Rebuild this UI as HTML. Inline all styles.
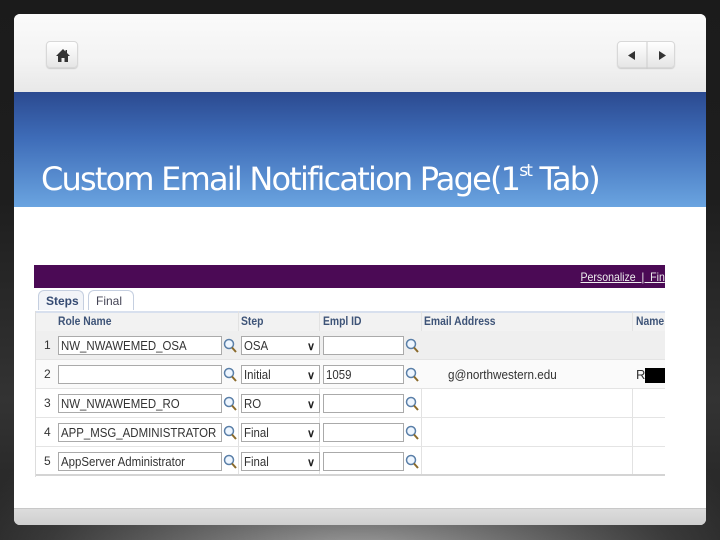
<!DOCTYPE html>
<html><head><meta charset="utf-8"><style>
*{margin:0;padding:0;box-sizing:border-box}
body{width:720px;height:540px;overflow:hidden;position:relative;font-family:"Liberation Sans",sans-serif;
background:radial-gradient(ellipse 420px 160px at 360px 560px,#a0a0a0 0%,#6a6a6a 40%,#3a3a3a 75%,#222 100%),#1c1c1c;}
.bg{position:absolute;left:0;top:0;width:720px;height:540px;background:linear-gradient(#1b1b1b 0,#1e1e1e 200px,#333 400px,rgba(0,0,0,0) 540px);}
.panel{position:absolute;left:14px;top:14px;width:692px;height:511px;border-radius:6px;background:#fff;overflow:hidden}
.top{position:absolute;left:0;top:0;width:692px;height:78px;background:linear-gradient(#fafafa,#f3f3f3 60%,#e8e8e8)}
.blue{position:absolute;left:0;top:78px;width:692px;height:115px;background:linear-gradient(#2b4a90 0%,#3e6cb8 40%,#6aa4e0 100%)}
.title{position:absolute;left:27px;top:146px;color:#fff;font-size:32px;font-family:"DejaVu Sans","Liberation Sans",sans-serif;letter-spacing:-1.8px;white-space:nowrap}
.title sup{font-size:17px;vertical-align:14px}
.foot{position:absolute;left:0;top:494px;width:692px;height:17px;background:linear-gradient(#dcdcdc,#cfcfcf);border-top:1px solid #c8c8c8}
.btn{position:absolute;border:1px solid #d8d8d8;border-radius:4px;background:linear-gradient(#fff,#e6e6e6);box-shadow:0 1px 1px #ccc}
.shot{position:absolute;left:34px;top:258px;width:631px;height:220px;background:#fff}
.purple{position:absolute;left:0;top:7px;width:631px;height:23px;background:#4b0a55}
.pers{position:absolute;right:0;top:5px;color:#eee;font-size:12px;text-decoration:underline;white-space:nowrap;transform:scaleX(.88);transform-origin:right}
.tab{position:absolute;top:32px;height:20px;border:1px solid #c5cfe0;border-bottom:none;border-radius:6px 6px 0 0;font-size:12px;font-weight:bold;color:#344a72;padding:3px 7px;background:#f2f4f8}
.hdr{position:absolute;left:2px;top:53px;width:629px;height:20px;background:#f2f2f2;border-top:2px solid #d8e0ee}
.h{position:absolute;top:3px;font-size:11.5px;font-weight:bold;color:#3e5478;transform:scaleX(.9);transform-origin:left}
.row{position:absolute;left:2px;width:629px;height:29px;border-bottom:1px solid #e4e4e4}
.n{position:absolute;left:8px;top:7px;font-size:12px;color:#333}
.in{position:absolute;top:5px;height:19px;border:1px solid #aaa;background:#fff;font-size:13px;color:#333;padding:1px 2px;white-space:nowrap;overflow:hidden}
.in span{display:inline-block;transform:scaleX(.88);transform-origin:left}
.mag{position:absolute;top:7px;width:14px;height:15px}
.chev{position:absolute;right:4px;top:3px;font-size:11px;color:#222}
.vl{position:absolute;top:53px;width:1px;height:165px;background:#e2e2e2}
</style></head><body>
<div class="bg"></div>
<div class="panel">
 <div class="top"></div>
 <div class="blue"></div>
 <div class="title">Custom Email Notification Page(1<sup>st</sup> Tab)</div>
 <div class="foot"></div>
</div>
<div class="btn" style="left:46px;top:41px;width:32px;height:27px">
 <svg width="32" height="27" viewBox="0 0 32 27"><path d="M16 7 L9 14 H11 V20 H14.5 V16 H17.5 V20 H21 V14 H23 L20 11 V8 H18.5 V9.5 Z" fill="#333"/></svg>
</div>
<div class="btn" style="left:617px;top:41px;width:58px;height:27px">
 <svg width="58" height="27" viewBox="0 0 58 27"><path d="M10 13.5 L17 9 V18 Z" fill="#333"/><line x1="29" y1="0" x2="29" y2="27" stroke="#ccc"/><path d="M48 13.5 L41 9 V18 Z" fill="#333"/></svg>
</div>
<div class="shot">
 <div class="purple"><div class="pers">Personalize &nbsp;|&nbsp; Fin</div></div>
 <div class="tab" style="left:4px;width:46px">Steps</div>
 <div class="tab" style="left:54px;width:46px;background:#fff;font-weight:normal;color:#445">Final</div>
 <div class="hdr">
  <div class="h" style="left:22px">Role Name</div>
  <div class="h" style="left:205px">Step</div>
  <div class="h" style="left:287px">Empl ID</div>
  <div class="h" style="left:388px">Email Address</div>
  <div class="h" style="left:600px">Name</div>
 </div>
 <div class="vl" style="left:204px"></div><div class="vl" style="left:285px"></div><div class="vl" style="left:387px"></div><div class="vl" style="left:598px"></div>
 <div class="row" style="top:73px;background:#efefef"><div class="n">1</div>
  <div class="in" style="left:22px;width:164px"><span>NW_NWAWEMED_OSA</span></div>
  <svg class="mag" style="left:187px" viewBox="0 0 14 15"><circle cx="6" cy="6" r="4.5" fill="#eef6ff" stroke="#5a7fa8" stroke-width="1.5"/><line x1="9" y1="9.5" x2="13" y2="14" stroke="#8a6a2a" stroke-width="2"/></svg>
  <div class="in" style="left:205px;width:79px"><span>OSA</span><b class="chev">&#x2228;</b></div>
  <div class="in" style="left:287px;width:81px"></div>
  <svg class="mag" style="left:369px" viewBox="0 0 14 15"><circle cx="6" cy="6" r="4.5" fill="#eef6ff" stroke="#5a7fa8" stroke-width="1.5"/><line x1="9" y1="9.5" x2="13" y2="14" stroke="#8a6a2a" stroke-width="2"/></svg>
 </div>
 <div class="row" style="top:102px;background:#fafafa"><div class="n">2</div>
  <div class="in" style="left:22px;width:164px"></div>
  <svg class="mag" style="left:187px" viewBox="0 0 14 15"><circle cx="6" cy="6" r="4.5" fill="#eef6ff" stroke="#5a7fa8" stroke-width="1.5"/><line x1="9" y1="9.5" x2="13" y2="14" stroke="#8a6a2a" stroke-width="2"/></svg>
  <div class="in" style="left:205px;width:79px"><span>Initial</span><b class="chev">&#x2228;</b></div>
  <div class="in" style="left:287px;width:81px"><span>1059</span></div>
  <svg class="mag" style="left:369px" viewBox="0 0 14 15"><circle cx="6" cy="6" r="4.5" fill="#eef6ff" stroke="#5a7fa8" stroke-width="1.5"/><line x1="9" y1="9.5" x2="13" y2="14" stroke="#8a6a2a" stroke-width="2"/></svg>
  <div style="position:absolute;left:412px;top:7px;font-size:13px;color:#333;transform:scaleX(.9);transform-origin:left">g@northwestern.edu</div>
  <div style="position:absolute;left:600px;top:7px;font-size:13px;color:#333">R</div>
  <div style="position:absolute;left:609px;top:8px;width:20px;height:15px;background:#000"></div>
 </div>
 <div class="row" style="top:131px"><div class="n">3</div>
  <div class="in" style="left:22px;width:164px"><span>NW_NWAWEMED_RO</span></div>
  <svg class="mag" style="left:187px" viewBox="0 0 14 15"><circle cx="6" cy="6" r="4.5" fill="#eef6ff" stroke="#5a7fa8" stroke-width="1.5"/><line x1="9" y1="9.5" x2="13" y2="14" stroke="#8a6a2a" stroke-width="2"/></svg>
  <div class="in" style="left:205px;width:79px"><span>RO</span><b class="chev">&#x2228;</b></div>
  <div class="in" style="left:287px;width:81px"></div>
  <svg class="mag" style="left:369px" viewBox="0 0 14 15"><circle cx="6" cy="6" r="4.5" fill="#eef6ff" stroke="#5a7fa8" stroke-width="1.5"/><line x1="9" y1="9.5" x2="13" y2="14" stroke="#8a6a2a" stroke-width="2"/></svg>
 </div>
 <div class="row" style="top:160px"><div class="n">4</div>
  <div class="in" style="left:22px;width:164px"><span>APP_MSG_ADMINISTRATOR</span></div>
  <svg class="mag" style="left:187px" viewBox="0 0 14 15"><circle cx="6" cy="6" r="4.5" fill="#eef6ff" stroke="#5a7fa8" stroke-width="1.5"/><line x1="9" y1="9.5" x2="13" y2="14" stroke="#8a6a2a" stroke-width="2"/></svg>
  <div class="in" style="left:205px;width:79px"><span>Final</span><b class="chev">&#x2228;</b></div>
  <div class="in" style="left:287px;width:81px"></div>
  <svg class="mag" style="left:369px" viewBox="0 0 14 15"><circle cx="6" cy="6" r="4.5" fill="#eef6ff" stroke="#5a7fa8" stroke-width="1.5"/><line x1="9" y1="9.5" x2="13" y2="14" stroke="#8a6a2a" stroke-width="2"/></svg>
 </div>
 <div class="row" style="top:189px;border-bottom:2px solid #d4d4d4"><div class="n">5</div>
  <div class="in" style="left:22px;width:164px"><span>AppServer Administrator</span></div>
  <svg class="mag" style="left:187px" viewBox="0 0 14 15"><circle cx="6" cy="6" r="4.5" fill="#eef6ff" stroke="#5a7fa8" stroke-width="1.5"/><line x1="9" y1="9.5" x2="13" y2="14" stroke="#8a6a2a" stroke-width="2"/></svg>
  <div class="in" style="left:205px;width:79px"><span>Final</span><b class="chev">&#x2228;</b></div>
  <div class="in" style="left:287px;width:81px"></div>
  <svg class="mag" style="left:369px" viewBox="0 0 14 15"><circle cx="6" cy="6" r="4.5" fill="#eef6ff" stroke="#5a7fa8" stroke-width="1.5"/><line x1="9" y1="9.5" x2="13" y2="14" stroke="#8a6a2a" stroke-width="2"/></svg>
 </div>
 <div style="position:absolute;left:1px;top:53px;width:1px;height:166px;background:#ddd"></div>
</div>
</body></html>
